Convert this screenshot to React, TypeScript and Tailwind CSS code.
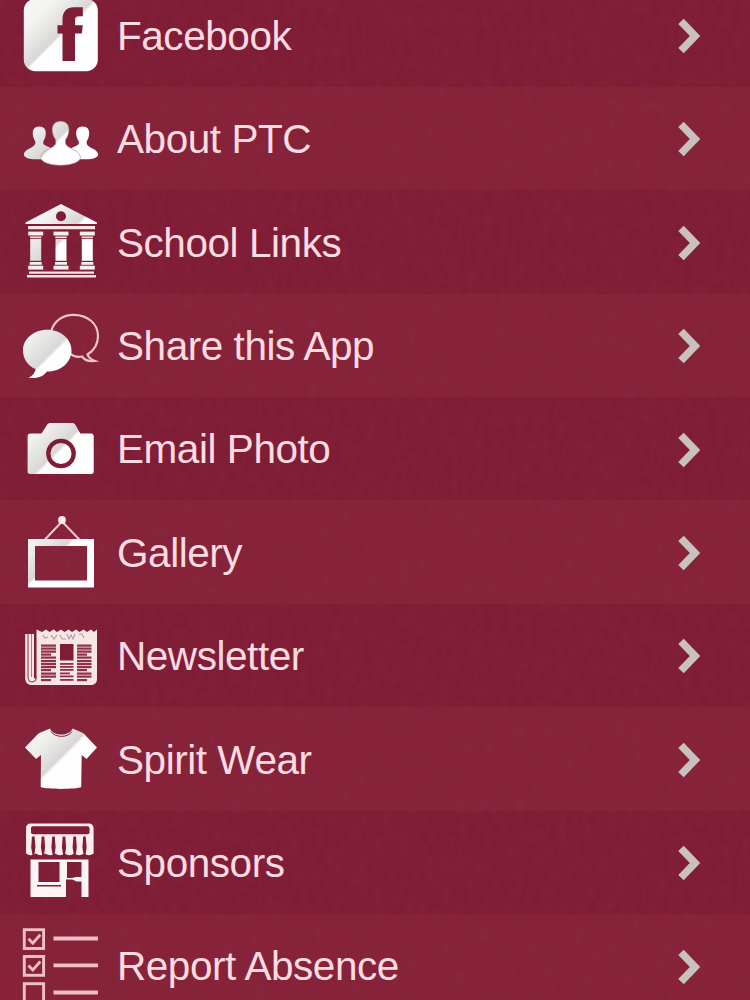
import type { ReactNode } from "react";

interface IItem {
  label: string;
  icon: ReactNode;
}

const GLOSS = "url(#gloss)";
const MAROON = "#7f1d37";

const FacebookIcon = () => (
  <>
    <rect x="3.800" y="3.900" width="74" height="72.300" rx="11.500" fill={GLOSS} />
    <path
      d="M42.500 66V38.500h-5v-8.300h5v-5.500C42.500 16.500 46.500 12.200 54 12.200h8.800v9h-4.300c-2.600 0-3.500 1.100-3.500 3.600v5.400h7.800l-1 8.300H55V66z"
      fill={MAROON}
    />
  </>
);

const PeopleIcon = () => (
  <g fill={GLOSS}>
    <path d="M19.300 28.500c4.800 0 6.800 3.200 6.500 7.400-.2 3.400-1.500 5.800-2.500 7.300v2.500c1.500 2.600 9.500 3.500 11 7.500-2 3-6 4-7.500 8H13c-5-.5-9-2.200-9.200-4.500.2-6 10-6.500 11.500-11v-2.500c-1.200-1.500-2.300-4-2.500-7.300-.3-4.200 1.700-7.400 6.500-7.400z" />
    <path d="M62.700 28.500c4.800 0 6.800 3.200 6.500 7.400-.2 3.400-1.500 5.800-2.500 7.300v2.500c1.400 4.500 11.300 5 11.500 11-.2 2.300-4.200 4-9.200 4.500H56c-1.500-4-5.500-5-7.500-8 1.500-4 8.800-4.900 10.300-7.500v-2.500c-1.200-1.500-2.400-4-2.600-7.300-.3-4.200 1.700-7.400 6.500-7.400z" />
    <path
      d="M40.600 23.300c5.900 0 8.700 4 8.300 9.500-.3 4-1.900 7-3.400 9v3.700c2 5.500 14.500 6 15 14.300-1 4.700-9.500 7.500-19.900 7.500s-18.900-2.800-19.900-7.500c.5-8.300 13-8.800 15-14.300v-3.700c-1.500-2-3.100-5-3.400-9-.4-5.500 2.400-9.500 8.300-9.500z"
      stroke="#b8808c"
      strokeWidth="0.600"
    />
  </g>
);

const BankIcon = () => (
  <>
    <path d="M41 2 77 20.500V22H5.500v-1.500z" fill={GLOSS} />
    <circle cx="41" cy="14.300" r="5" fill={MAROON} />
    <path d="M8 24h67v3.200H8zM7 73h69v2.600H7zM9 69.600h65v2.200H9z" fill="#fbe3e6" />
    {[15.700, 41, 67.300].map((x) => (
      <g key={x} fill="#f7eeee">
        <path d={`M${x - 7.500} 29.600h15v3.900h-15z`} />
        <path d={`M${x - 5.700} 34.500h11.400v1.400h-11.400z`} />
        <path d={`M${x - 5.500} 36.800h11v22h-11z`} fill={GLOSS} />
        <path d={`M${x - 6} 60h12v2.800h-12z`} />
        <path d={`M${x - 7.500} 63.700h15v3.900h-15z`} />
      </g>
    ))}
  </>
);

const ChatIcon = () => (
  <>
    <path
      d="M31.500 25.500C34 16 43 9.800 53.500 9.800 67.500 9.800 78 18.500 78 31c0 8-4 14.500-10.500 18.500 1 3 3.500 5 7.500 6.500-5 .8-10-.7-13-4.500-4.500.9-8.500.3-12-3"
      fill="none"
      stroke="#f0c3cb"
      strokeWidth="2.200"
    />
    <path
      d="M27.300 24.700c13.500 0 24.200 9 24.200 20.800S40.800 66.500 28 66.500h-1c-3 4.500-9.500 7.500-18.500 6.200 4.500-2 6.500-5 7-8.700C8 61 3 54 3 45.500c0-11.800 10.800-20.800 24.300-20.800z"
      fill={GLOSS}
    />
  </>
);

const CameraIcon = () => (
  <>
    <path
      d="M30.500 14h21.500c1.500 0 2.500.5 3.500 2l4.800 8.500H71c1.700 0 2.700 1 2.700 2.700V62.500c0 1.700-1 2.500-2.700 2.500H10.300c-1.700 0-2.700-.8-2.700-2.500V27.200c0-1.700 1-2.700 2.700-2.700H21.500l5.500-8.500c1-1.500 2-2 3.500-2z"
      fill={GLOSS}
    />
    <circle cx="41" cy="44.500" r="12.700" fill="none" stroke={MAROON} strokeWidth="4.300" />
  </>
);

const FrameIcon = () => (
  <>
    <path d="M24.500 28 42 9.500 59.800 28" fill="none" stroke="#f0c9d0" strokeWidth="2" />
    <circle cx="42" cy="8" r="3.900" fill="#fbeaec" />
    <path d="M11.500 30.500h59v41.500h-59z" fill="none" stroke={GLOSS} strokeWidth="7" />
  </>
);

const NewspaperIcon = () => (
  <>
    <path
      d="M5.200 19v44c0 4.500 2.500 7 7 7H71c3.800 0 6-2.500 6-6V14.500l-3 2.500-3-2.500-4 2.500-3.500-2.500-4 2.500-3.500-2.500-4 2.500-3.500-2.500-4 2.500-3.500-2.500-4 2.500-3.500-2.500-4 2.500-3.500-2.500-4 2.500L16.500 14.500v47.500c0 2-2.500 2-2.500 0V19z"
      fill="#f7e6e8"
    />
    <path d="M8 19v43c0 7 8 6 8.500 0" fill="none" stroke="#a34b60" strokeWidth="1.200" />
    <path d="M11.500 19v43" stroke="#b97584" strokeWidth="1" />
    <path
      d="M23 20l2 3 3-1m3-2l3 4 3-4m3 0l2 4h4m1-5l2 5 2-4 2 4 2-5m4 0h3l2 4"
      fill="none"
      stroke="#b39aa0"
      strokeWidth="1.100"
    />
    <path d="M40 29h13.500v16.500H40z" fill={MAROON} />
    {[29.500, 32.500, 35.500, 38.500, 41.500, 45, 48, 51, 54, 57.500, 60.500, 64].map((y, i) => (
      <g key={y} fill="#8f3048">
        <rect x="21" y={y} width={i === 3 || i === 8 || i === 11 ? 10 : 15} height="2.200" />
        <rect x="57" y={y} width={i === 3 || i === 8 || i === 11 ? 10 : 14.500} height="2.200" />
        {i > 5 && <rect x="40" y={y} width={i === 9 ? 10 : 13.500} height="1.800" />}
      </g>
    ))}
  </>
);

const ShirtIcon = () => (
  <>
    <path
      d="M30 9.500c3 8 19.500 8 22.500 0L62 13.500c2 .9 3 2 4 3.500l11 11.500L66.500 40l-4.800-4-.5 32c-5 2.500-35.500 2.500-40.500 0l.3-32-5 4L5 28.500 16 17c1.200-1.500 2.500-2.700 4.500-3.500z"
      fill={GLOSS}
    />
    <path d="M31 12.500c4 6.500 17 6.500 21 0" fill="none" stroke={MAROON} strokeWidth="1" />
  </>
);

const StoreIcon = () => (
  <>
    <path
      d="M11 1.500h57.500c3.500 0 5.100 2 5.100 5V31.500q-4.800 3.500-9.650 0q-4.800 3.500-9.650 0q-4.800 3.500-9.650 0q-4.800 3.500-9.650 0q-4.800 3.500-9.650 0q-4.800 3.500-9.650 0q-4.800 3.500-9.650 0V6.500c0-3 1.600-5 5.100-5z"
      fill="#fbecee"
    />
    <rect x="11" y="4.300" width="58.500" height="8" rx="2" fill={MAROON} />
    {[13.300, 23, 33.500, 44, 54.700, 64.500].map((x) => (
      <path
        key={x}
        d={`M${x - 1.300} 14.500h2.600l.8 11-1.200 8h-1.600l-1.400-8z`}
        fill={MAROON}
      />
    ))}
    <path
      d="M10.500 37.500h58v37.500h-7V59.500h-5l-4-2h-6.500V75H10.500zM18.500 40v20h21V40zM47 40v16h5l4-1h5.500V40zM17 63v1.500h24V63z"
      fillRule="evenodd"
      fill="#fdf4f5"
    />
  </>
);

const ChecklistIcon = () => (
  <g fill="none" stroke="#f0c0c9">
    {[3.700, 30.500, 57.700].map((y, i) => (
      <g key={y}>
        <rect x="4.300" y={y} width="19.300" height="18.800" strokeWidth="2.900" />
        {i < 2 && <path d={`M8.500 ${y + 9} l4.300 4.500 7.500-8.500`} strokeWidth="2.800" />}
        <path d={`M33.500 ${y + 8.800}h44.500`} strokeWidth="3.800" />
      </g>
    ))}
  </g>
);

const items: IItem[] = [
  { label: "Facebook", icon: <FacebookIcon /> },
  { label: "About PTC", icon: <PeopleIcon /> },
  { label: "School Links", icon: <BankIcon /> },
  { label: "Share this App", icon: <ChatIcon /> },
  { label: "Email Photo", icon: <CameraIcon /> },
  { label: "Gallery", icon: <FrameIcon /> },
  { label: "Newsletter", icon: <NewspaperIcon /> },
  { label: "Spirit Wear", icon: <ShirtIcon /> },
  { label: "Sponsors", icon: <StoreIcon /> },
  { label: "Report Absence", icon: <ChecklistIcon /> },
];

const MenuRow = ({ label, icon }: IItem) => (
  <li className="flex h-[103.4px] items-center pr-[44px] pl-5 even:bg-[#bb5954]/10">
    <svg viewBox="0 0 80 80" className="h-20 w-20 shrink-0">
      {icon}
    </svg>
    <span className="ml-[17px] flex-1 pt-[2px] text-[40.5px] leading-none tracking-[-0.45px] whitespace-nowrap text-[#fadbe1]">
      {label}
    </span>
    <svg viewBox="0 0 28 40" className="h-10 w-7 shrink-0">
      <path d="M3 6.300 17 21 3 35.700" fill="none" stroke="#c9c1bf" strokeWidth="7.600" />
    </svg>
  </li>
);

export default function App() {
  return (
    <main className="relative h-[1000px] w-[750px] overflow-hidden bg-[#801d36] font-['Liberation_Sans',Arial,sans-serif]">
      {/* fabric grain behind the rows, plus the shared icon gradient */}
      <svg className="pointer-events-none absolute inset-0 h-full w-full opacity-10">
        <defs>
          <linearGradient id="gloss" gradientUnits="userSpaceOnUse" x1="3" y1="3" x2="78" y2="78">
            <stop offset="0" stopColor="#fafafa" />
            <stop offset="0.25" stopColor="#f1f1ef" />
            <stop offset="0.485" stopColor="#d8d7d5" />
            <stop offset="0.51" stopColor="#fdfdfd" />
            <stop offset="1" stopColor="#ffffff" />
          </linearGradient>
          <filter id="grain" x="0" y="0" width="100%" height="100%">
            <feTurbulence type="fractalNoise" baseFrequency="0.12 0.07" numOctaves="2" seed="4" />
            <feColorMatrix values="0 0 0 0 0.3  0 0 0 0 0.05  0 0 0 0 0.15  2.5 0 0 0 -1.05" />
          </filter>
        </defs>
        <rect width="100%" height="100%" filter="url(#grain)" />
      </svg>
      <ul className="relative -mt-[16.6px]">
        {items.map((item) => (
          <MenuRow key={item.label} {...item} />
        ))}
      </ul>
    </main>
  );
}
